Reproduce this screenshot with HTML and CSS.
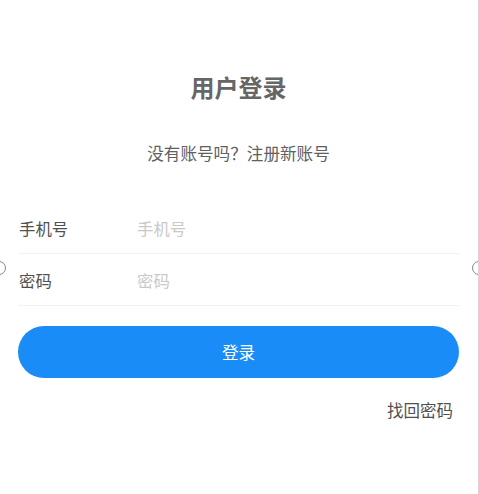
FILE: index.html
```html
<!DOCTYPE html>
<html lang="zh-CN">
<head>
    <meta charset="UTF-8">
    <meta name="viewport" content="width=device-width, initial-scale=1.0">
    <title>用户登录</title>
    <link rel="stylesheet" href="styles.css">
</head>
<body>

    <div class="page">
        <h2 class="title">用户登录</h2>
        <p class="register">没有账号吗？<a href="#">注册新账号</a></p>

        <form class="login-form">
            <div class="field">
                <label for="phone">手机号</label>
                <input id="phone" type="text" placeholder="手机号">
            </div>
            <div class="field">
                <label for="pwd">密码</label>
                <input id="pwd" type="password" placeholder="密码">
            </div>
            <button type="button" class="btn-login">登录</button>
        </form>

        <div class="links">
            <a href="#">找回密码</a>
        </div>

        <!-- resize handles of the preview frame -->
        <span class="handle handle-left"></span>
        <span class="handle handle-right"></span>
    </div>

</body>
</html>
```

FILE: styles.css
```css
body {
    margin: 0;
    padding: 0;
    font-family: 'Noto Sans CJK SC', 'Noto Sans', sans-serif;
    background: #fff;
    color: #666;
}

.page {
    position: relative;
    height: 494px;
    box-sizing: border-box;
    padding: 0 19px 0 18px;
    border-right: 1px solid #d4d4de;
    overflow: hidden;
}

.title {
    margin: 0;
    padding-top: 70px;
    font-size: 24px;
    line-height: 34px;
    font-weight: bold;
    text-align: center;
    color: #666;
}

.register {
    margin: 38px 0 0;
    font-size: 16.6px;
    line-height: 22px;
    text-align: center;
    color: #606060;
}

.register a {
    color: #606060;
    text-decoration: none;
}

.login-form {
    margin-top: 38px;
}

.field {
    display: flex;
    align-items: center;
    height: 51px;
    border-bottom: 1px solid #f2f2f2;
}

.field label {
    width: 118px;
    padding-left: 1px;
    font-size: 16.4px;
    color: #505050;
}

.field input {
    flex: 1;
    border: none;
    outline: none;
    font-family: inherit;
    font-size: 16.4px;
    color: #333;
    padding: 0;
    background: transparent;
}

.field input::placeholder {
    color: #c8c9cc;
}

.btn-login {
    display: block;
    width: 100%;
    height: 52px;
    margin-top: 20px;
    border: none;
    border-radius: 26px;
    background-color: #1a8cf7;
    color: #fff;
    font-family: inherit;
    font-size: 16.5px;
}

.links {
    margin-top: 20px;
    padding-right: 6px;
    text-align: right;
}

.links a {
    font-size: 16.5px;
    line-height: 24px;
    color: #505050;
    text-decoration: none;
}

.handle {
    position: absolute;
    top: 261px;
    width: 12px;
    height: 12px;
    border: 1px solid #888;
    border-radius: 50%;
    background: #fff;
}

.handle-left {
    left: -8px;
}

.handle-right {
    right: -8px;
}
```
